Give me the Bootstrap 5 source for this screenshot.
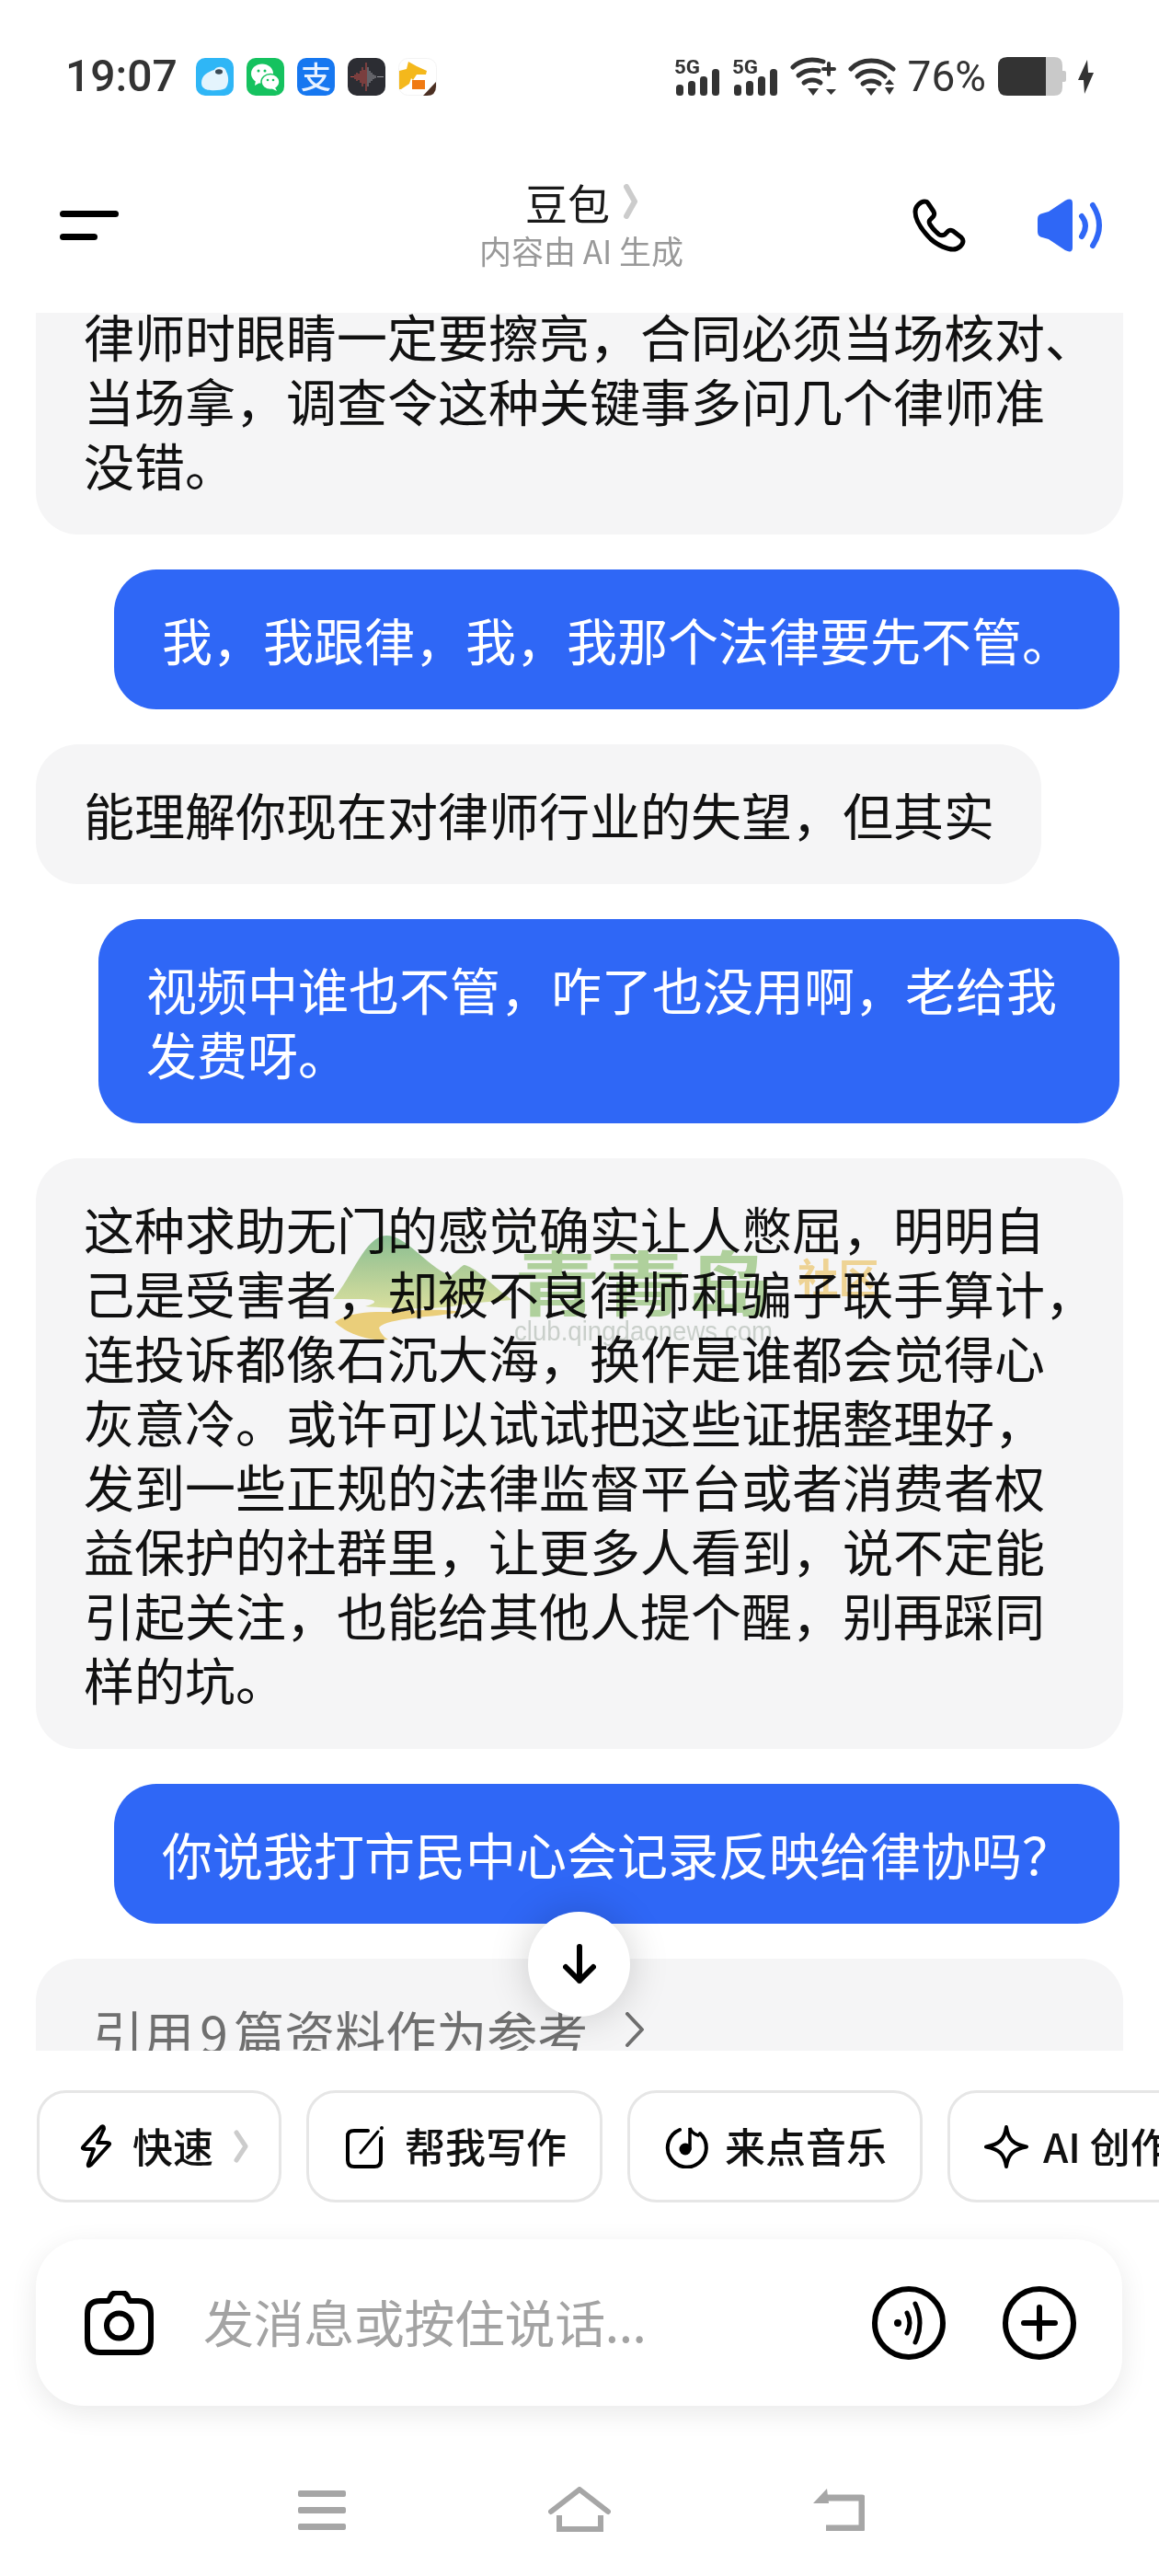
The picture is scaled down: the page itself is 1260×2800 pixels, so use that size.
<!DOCTYPE html>
<html lang="zh-CN">
<head>
  <meta charset="UTF-8" />
  <title>豆包</title>
  <meta name="viewport" content="width=device-width, initial-scale=1" />
  <link href="https://cdn.jsdelivr.net/npm/bootstrap@5.3.0/dist/css/bootstrap.min.css" rel="stylesheet" />
  <style>
    html, body { background: #fff; }
    body { width: 1260px; height: 2800px; overflow: hidden; font-family: "Noto Sans CJK SC", "Noto Sans", sans-serif; color: #111; }
    svg { display: block; flex-shrink: 0; }

    /* status bar */
    .status-bar { height: 150px; padding: 61px 71px 0 71px; }
    .status-time { font: 500 48px/44px Roboto, sans-serif; color: #333; margin-right: 20px; white-space: nowrap; }
    .status-apps { gap: 14px; }
    .status-pct { font: 400 46px/44px Roboto, sans-serif; color: #333; white-space: nowrap; }
    .status-tray { gap: 13px; }

    /* header */
    .chat-header { height: 190px; padding: 0 61px 0 65px; }
    .header-side { width: 300px; }
    .header-tools { gap: 78px; }
    .header-name { font-size: 46px; line-height: 46px; gap: 15px; color: #1a1a1a; }
    .header-sub { font-size: 35px; line-height: 44px; color: #999; margin-top: 8px; white-space: nowrap; }

    /* messages */
    .chat-scroll { height: 1889px; overflow: hidden; gap: 38px; }
    .msg-bubble { font-size: 55px; line-height: 70px; padding: 40px 51px 42px 52px; border-radius: 46px; white-space: nowrap; }
    .msg-bot { background: #f5f5f6; margin-left: 39px; align-self: flex-start; }
    .msg-user { background: #2f67f6; color: #fff; margin-right: 43px; align-self: flex-end; }
    .msg-first { margin-top: -51px; width: 1182px; }
    .msg-long { width: 1182px; position: relative; }
    .msg-wide { padding-right: 68px; }
    .msg-cite { width: 1182px; color: #6f6f6f; padding: 44px 0 0 62px; height: 200px; flex-shrink: 0; word-spacing: -6px; gap: 40px; }
    .cite-arrow { margin-top: 14px; }
    .water-mark { position: absolute; left: 323px; top: 81px; mix-blend-mode: multiply; pointer-events: none; }
    .down-btn { position: absolute; left: 574px; top: 1738px; width: 111px; height: 114px; background: #fff; box-shadow: 0 0 44px rgba(0, 0, 0, .18); }

    /* chips */
    .chip-row { margin-top: 43px; padding-left: 40px; gap: 27px; overflow: hidden; }
    .chip-item { height: 122px; padding-bottom: 3px; flex-shrink: 0; border: 3px solid #e6e6e6; border-radius: 32px; font-size: 44px; font-weight: 500; white-space: nowrap; }
    .chip-1 { width: 266px; padding-left: 43px; gap: 22px; }
    .chip-2 { width: 322px; padding-left: 40px; gap: 22px; }
    .chip-3 { width: 321px; padding-left: 37px; gap: 18px; }
    .chip-4 { width: 300px; padding-left: 37px; gap: 16px; }
    .chip-item svg { margin-top: 3px; }

    /* input */
    .input-card { margin: 40px 40px 0 39px; height: 181px; padding: 0 50px 0 53px; border-radius: 52px; background: #fff; box-shadow: 0 8px 30px rgba(0, 0, 0, .09); }
    .input-hint { font-size: 55px; letter-spacing: -.4px; color: #a3a3a3; margin-left: 54px; padding-bottom: 4px; }
    .input-actions { gap: 62px; }

    /* system nav */
    .nav-keys { margin-top: 88px; padding-left: 324px; gap: 220px; }
  </style>
</head>
<body>

<div class="position-relative">

  <!-- Status bar -->
  <div class="status-bar d-flex justify-content-between align-items-start">
    <div class="d-flex align-items-center">
      <div class="status-time">19:07</div>
      <div class="status-apps d-flex align-items-center">
        <svg width="41" height="41" viewBox="0 0 41 41"><rect width="41" height="41" rx="10" fill="#2fb6f6"/><path d="M6 27C6 19 13 15 20 13C23 8 32 9 33 15C36 20 36 29 32 33C27 36 11 36 9 33C7 32 6 30 6 27Z" fill="#e4f4fd"/><ellipse cx="25" cy="15" rx="4" ry="2.800" fill="#3b4a55"/></svg>
        <svg width="41" height="41" viewBox="0 0 41 41"><rect width="41" height="41" rx="10" fill="#15c25f"/><ellipse cx="17" cy="17" rx="12" ry="10.500" fill="#fff"/><path d="M10 24L9 30L16 26Z" fill="#fff"/><ellipse cx="26" cy="26" rx="10" ry="8.500" fill="#fff" stroke="#15c25f" stroke-width="1.500"/><path d="M31 32L33 36L27 33Z" fill="#fff"/><circle cx="13" cy="14" r="1.500" fill="#15c25f"/><circle cx="20" cy="14" r="1.500" fill="#15c25f"/><circle cx="23" cy="24" r="1.300" fill="#15c25f"/><circle cx="29" cy="24" r="1.300" fill="#15c25f"/></svg>
        <svg width="41" height="41" viewBox="0 0 41 41"><rect width="41" height="41" rx="10" fill="#1677f0"/><text x="20.500" y="33" font-size="33" font-weight="500" fill="#e8f2ff" text-anchor="middle">支</text></svg>
        <svg width="41" height="41" viewBox="0 0 41 41"><rect width="41" height="41" rx="10" fill="#2c2d33"/><path d="M3 20.500H7M8 18V23M10 16V25M12 17V24M14 14V27M16 10V31M18 13V28M20 5V36" stroke="#c8504a" stroke-width="1" fill="none"/><path d="M22 10V31M24 14V27M26 16V25M28 18V23M30 19V22M32 20.500H39" stroke="#9a9aa0" stroke-width="1" fill="none"/></svg>
        <svg width="42" height="41" viewBox="0 0 42 41"><rect x=".5" y=".5" width="41" height="40" rx="10" fill="#fff" stroke="#f3f3f3"/><path d="M1 14L9 12L11 4L20 9L31 14L30 18L20 18L16 24L14 22L12 28L3 34L1 34Z" fill="#f4b81c"/><rect x="15" y="24" width="14" height="10" fill="#f07a13"/><path d="M27 41L41 26V31Q41 41 31 41Z" fill="#4b2f22"/></svg>
      </div>
    </div>
    <div class="status-tray d-flex align-items-center">
      <svg width="50" height="42" viewBox="0 0 50 42"><text x="0" y="18" font-family="Roboto, sans-serif" font-size="21" font-weight="700" fill="#333" textLength="28" lengthAdjust="spacingAndGlyphs">5G</text><rect x="2" y="30" width="8" height="12" rx="3.500" fill="#333"/><rect x="15" y="26" width="8" height="16" rx="3.500" fill="#333"/><rect x="28" y="21" width="8" height="21" rx="3.500" fill="#333"/><rect x="41" y="13" width="8" height="29" rx="3.500" fill="#333"/></svg>
      <svg width="50" height="42" viewBox="0 0 50 42"><text x="0" y="18" font-family="Roboto, sans-serif" font-size="21" font-weight="700" fill="#333" textLength="28" lengthAdjust="spacingAndGlyphs">5G</text><rect x="2" y="30" width="8" height="12" rx="3.500" fill="#333"/><rect x="15" y="26" width="8" height="16" rx="3.500" fill="#333"/><rect x="28" y="21" width="8" height="21" rx="3.500" fill="#333"/><rect x="41" y="13" width="8" height="29" rx="3.500" fill="#333"/></svg>
      <svg width="50" height="42" viewBox="0 0 50 42"><g fill="none" stroke="#333" stroke-width="5" stroke-linecap="round"><path d="M3 11C11 3 24 1 36 5"/><path d="M9 20C15 15 23 13 31 15"/><path d="M15 28C20 24 28 24 33 28"/><path d="M42 7V19M36 13H48" stroke-width="4"/></g><path d="M19 34H31L25 42Z" fill="#333"/><path d="M39 35H50L44.500 41Z" fill="#333"/></svg>
      <svg width="52" height="42" viewBox="0 0 52 42"><g fill="none" stroke="#333" stroke-width="5" stroke-linecap="round"><path d="M3 13C14 1 36 1 49 13"/><path d="M10 21C18 13 32 13 40 21"/><path d="M16 29C21 25 29 25 34 29"/></g><path d="M19 34H31L25 42Z" fill="#333"/><path d="M40 30H50L45 24ZM40 33H50L45 41Z" fill="#333"/></svg>
      <div class="status-pct">76%</div>
      <svg width="74" height="42" viewBox="0 0 74 42"><path d="M52 0H61Q70 0 70 9V33Q70 42 61 42H52ZM70 15H72Q74 15 74 17V25Q74 27 72 27H70Z" fill="#c9c9c9"/><path d="M10 0H52V42H10Q0 42 0 32V10Q0 0 10 0Z" fill="#333"/></svg>
      <svg width="17" height="37" viewBox="0 0 17 37"><path d="M10 0L0 22H6L7 37L17 14H11Z" fill="#333"/></svg>
    </div>
  </div>

  <!-- Chat header -->
  <div class="chat-header d-flex justify-content-between align-items-center">
    <div class="header-side">
      <svg width="64" height="33" viewBox="0 0 64 33"><rect width="64" height="7" rx="3.500" fill="#000"/><rect y="25" width="41" height="7" rx="3.500" fill="#000"/></svg>
    </div>
    <div class="text-center">
      <div class="header-name d-flex justify-content-center align-items-center">
        <span>豆包</span>
        <svg width="15" height="38" viewBox="0 0 15 38"><path d="M3 3L12 19L3 35" fill="none" stroke="#ccc" stroke-width="6" stroke-linecap="round" stroke-linejoin="round"/></svg>
      </div>
      <div class="header-sub">内容由 AI 生成</div>
    </div>
    <div class="header-side header-tools d-flex justify-content-end align-items-center">
      <svg width="58" height="58" viewBox="0 0 58 58"><path d="M13 3C9 3 3 8 3 14C3 24 12 36 20 44C28 51 38 55 44 55C50 55 55 50 55 46C55 44 54 43 53 42L44 35C42 34 40 34 39 35L35 39C33 40 31 40 29 39C25 36 21 31 19 28C18 26 18 24 19 23L22 20C24 18 24 16 23 14L17 5C16 3 14 3 13 3Z" fill="none" stroke="#000" stroke-width="5" stroke-linejoin="round"/></svg>
      <svg width="71" height="58" viewBox="0 0 71 58"><path d="M0 22Q0 17 5 16L12 14L30 2Q38 -2 38 5V53Q38 60 30 56L12 44L5 42Q0 41 0 36Z" fill="#2f67f6"/><path d="M48 19Q56 29 48 41M60 7Q74 29 60 51" fill="none" stroke="#2f67f6" stroke-width="6" stroke-linecap="round"/></svg>
    </div>
  </div>

  <!-- Messages -->
  <div class="chat-scroll position-relative d-flex flex-column">
    <div class="msg-bubble msg-bot msg-first">律师时眼睛一定要擦亮，合同必须当场核对、<br>当场拿，调查令这种关键事多问几个律师准<br>没错。</div>
    <div class="msg-bubble msg-user">我，我跟律，我，我那个法律要先不管。</div>
    <div class="msg-bubble msg-bot">能理解你现在对律师行业的失望，但其实</div>
    <div class="msg-bubble msg-user msg-wide">视频中谁也不管，咋了也没用啊，老给我<br>发费呀。</div>
    <div class="msg-bubble msg-bot msg-long">这种求助无门的感觉确实让人憋屈，明明自<br>己是受害者，却被不良律师和骗子联手算计，<br>连投诉都像石沉大海，换作是谁都会觉得心<br>灰意冷。或许可以试试把这些证据整理好，<br>发到一些正规的法律监督平台或者消费者权<br>益保护的社群里，让更多人看到，说不定能<br>引起关注，也能给其他人提个醒，别再踩同<br>样的坑。
      <svg class="water-mark" width="600" height="125" viewBox="0 0 600 125">
        <defs>
          <linearGradient id="hillFill" x1="0" y1="0" x2="0" y2="1"><stop offset="0" stop-color="#8fc597"/><stop offset="1" stop-color="#e2e8a4"/></linearGradient>
        </defs>
        <path d="M0 72C20 50 35 3 58 3C80 3 100 35 128 47C135 42 140 35 143 35C160 40 175 60 195 73C170 75 150 76 130 80C100 84 60 82 35 80C50 76 48 72 30 72Z" fill="url(#hillFill)"/>
        <path d="M2 97C20 85 45 86 60 86C95 84 115 82 140 86C110 92 60 92 50 103C52 112 60 116 60 116C40 118 15 110 2 97Z" fill="#f4d77e"/>
        <text x="197" y="84" font-size="76" font-weight="700" fill="#b6d9a2" textLength="281" lengthAdjust="spacingAndGlyphs">青青岛</text>
        <text x="505" y="66" font-size="44" font-weight="700" fill="#f8dc9a" textLength="89" lengthAdjust="spacingAndGlyphs">社区</text>
        <text x="197" y="117" font-family="'Liberation Sans', sans-serif" font-size="29" fill="#d2d8d2" textLength="281" lengthAdjust="spacingAndGlyphs">club.qingdaonews.com</text>
      </svg>
    </div>
    <div class="msg-bubble msg-user">你说我打市民中心会记录反映给律协吗？</div>
    <div class="msg-bubble msg-bot msg-cite d-flex">
      <span>引用 9 篇资料作为参考</span>
      <svg class="cite-arrow" width="22" height="38" viewBox="0 0 22 38"><path d="M3 2L19 19L3 36" fill="none" stroke="#6f6f6f" stroke-width="4" stroke-linecap="round" stroke-linejoin="round"/></svg>
    </div>
    <div class="down-btn rounded-circle d-flex justify-content-center align-items-center">
      <svg width="36" height="44" viewBox="0 0 36 44"><path d="M18 3V40M3 25L18 40L33 25" fill="none" stroke="#000" stroke-width="6" stroke-linecap="round" stroke-linejoin="round"/></svg>
    </div>
  </div>

  <!-- Quick chips -->
  <div class="chip-row d-flex">
    <div class="chip-item chip-1 d-flex align-items-center">
      <svg width="36" height="48" viewBox="0 0 36 48"><path d="M24 3L5 24Q2 27 7 27H16L10 43Q9 47 13 44L32 23Q35 20 30 20H20L27 5Q27 1 24 3Z" fill="none" stroke="#000" stroke-width="4" stroke-linejoin="round"/></svg>
      <span>快速</span>
      <svg width="16" height="36" viewBox="0 0 16 36"><path d="M3 3L13 18L3 33" fill="none" stroke="#ccc" stroke-width="5" stroke-linecap="round" stroke-linejoin="round"/></svg>
    </div>
    <div class="chip-item chip-2 d-flex align-items-center">
      <svg width="42" height="47" viewBox="0 0 42 47"><path d="M24 6H9Q2 6 2 12V38Q2 45 9 45H31Q38 45 38 38V14" fill="none" stroke="#000" stroke-width="4" stroke-linecap="round"/><path d="M16 30L35 7" stroke="#000" stroke-width="3" stroke-linecap="round"/><circle cx="39" cy="3" r="2" fill="#000"/></svg>
      <span>帮我写作</span>
    </div>
    <div class="chip-item chip-3 d-flex align-items-center">
      <svg width="48" height="47" viewBox="0 0 48 47"><path d="M17 5A21 21 0 1 0 39 9" fill="none" stroke="#000" stroke-width="4" stroke-linecap="round"/><circle cx="23" cy="26" r="6.500" fill="#000"/><path d="M28 26V3Q30 9 37 11" fill="none" stroke="#000" stroke-width="3.500" stroke-linecap="round"/></svg>
      <span>来点音乐</span>
    </div>
    <div class="chip-item chip-4 d-flex align-items-center">
      <svg width="48" height="47" viewBox="0 0 48 47"><path d="M24 2C26 16 32 21 46 23.500C32 26 26 31 24 45C22 31 16 26 2 23.500C16 21 22 16 24 2Z" fill="none" stroke="#000" stroke-width="4" stroke-linejoin="round"/></svg>
      <span>AI 创作</span>
    </div>
  </div>

  <!-- Input -->
  <div class="input-card d-flex align-items-center">
    <svg width="75" height="70" viewBox="0 0 75 70"><path d="M26 11L29 5Q31 2 35 2H40Q44 2 46 5L49 11H58Q72 11 72 25V52Q72 67 58 67H17Q3 67 3 52V25Q3 11 17 11Z" fill="none" stroke="#000" stroke-width="6" stroke-linejoin="round"/><circle cx="37.500" cy="38" r="13.500" fill="none" stroke="#000" stroke-width="6"/></svg>
    <span class="input-hint flex-grow-1">发消息或按住说话...</span>
    <div class="input-actions d-flex align-items-center">
      <svg width="80" height="80" viewBox="0 0 80 80"><circle cx="40" cy="40" r="37" fill="none" stroke="#000" stroke-width="6"/><circle cx="28" cy="40" r="4" fill="#000"/><path d="M38 29Q44 40 38 51M47 19Q57 40 47 61" fill="none" stroke="#000" stroke-width="5" stroke-linecap="round"/></svg>
      <svg width="80" height="80" viewBox="0 0 80 80"><circle cx="40" cy="40" r="37" fill="none" stroke="#000" stroke-width="6"/><path d="M23 40H57M40 23V57" stroke="#000" stroke-width="6" stroke-linecap="round"/></svg>
    </div>
  </div>

  <!-- System nav keys -->
  <div class="nav-keys d-flex align-items-center">
    <svg width="52" height="43" viewBox="0 0 52 43"><rect width="52" height="7" rx="2" y="0" fill="#a6a6a6"/><rect width="52" height="7" rx="2" y="18" fill="#a6a6a6"/><rect width="52" height="7" rx="2" y="36" fill="#a6a6a6"/></svg>
    <svg width="68" height="50" viewBox="0 0 68 50"><path d="M3 27L34 3L65 27" fill="none" stroke="#a6a6a6" stroke-width="6" stroke-linecap="round" stroke-linejoin="round"/><path d="M12 31V46H57V31" fill="none" stroke="#a6a6a6" stroke-width="6"/></svg>
    <svg width="56" height="46" viewBox="0 0 56 46"><path d="M15 10H53V43H14" fill="none" stroke="#a6a6a6" stroke-width="7" stroke-linejoin="round"/><path d="M0 16L15 0L17 16Z" fill="#a6a6a6"/></svg>
  </div>

</div>

</body>
</html>
